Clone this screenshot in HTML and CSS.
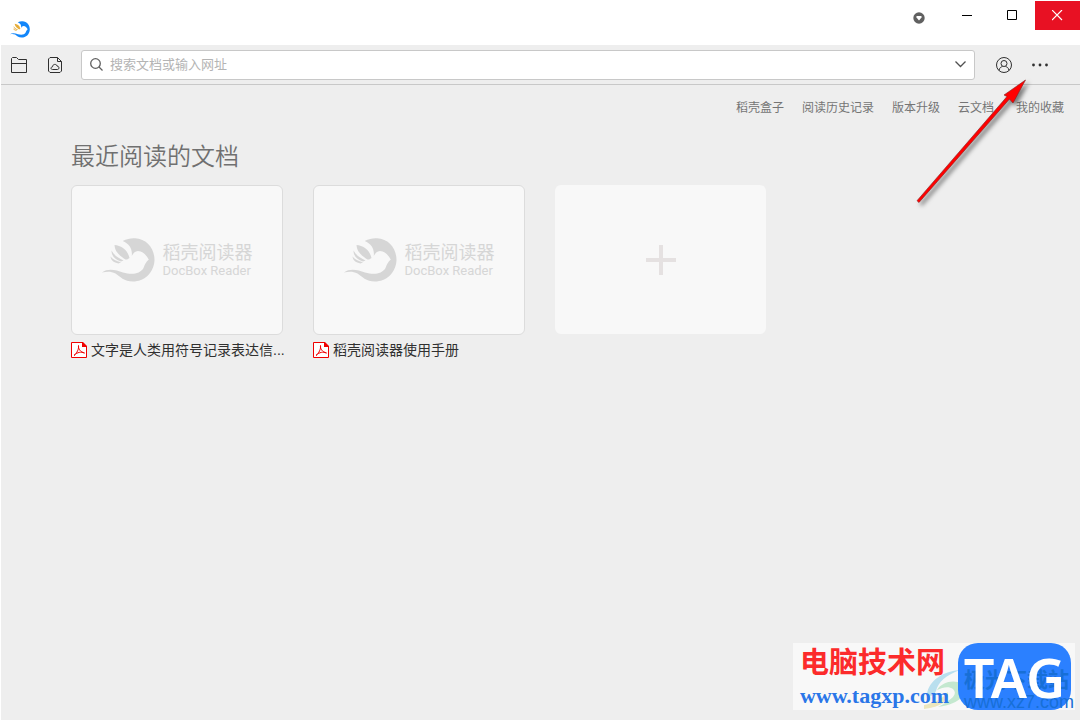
FILE: index.html
```html
<!DOCTYPE html>
<html lang="zh-CN">
<head>
<meta charset="utf-8">
<meta name="viewport" content="width=device-width, initial-scale=1">
<title>稻壳阅读器</title>
<link rel="stylesheet" href="styles.css">
</head>
<body>
<svg class="defs" aria-hidden="true">
  <symbol id="bird" viewBox="0 0 53 44">
    <path fill="currentColor" d="M20.700 3C25 1 29 0 33 .3C45 1 52.500 10.500 52.500 22C52 35 42 43.500 31 43.500C22 43.500 18 38.500 13.500 35.500C9 33 4.500 33.500 0 34.500C6 30 14 32 21 34.500C30 37 38 36 41.500 30C43 26 44 24 46.800 21.500C44 17 41 13 36 13C33 13 31 15.500 29.800 18C30.500 10 27 6 20.700 3Z"/>
    <g class="wing">
      <path d="M12.500 7C19 7.500 25.500 11.500 27.500 20C26.500 21 25 21.700 23.500 21.500C17 17.500 12.500 13 12.500 7Z"/>
      <path d="M9.500 12.500C12 17 16 20 21.500 22.500L19 23.500C13 21.500 9.500 18 9.500 12.500Z"/>
      <path d="M8.500 18.500C11 21.500 14 23 19 24.300L16.500 25.500C12 24.500 9 22.500 8.500 18.500Z"/>
    </g>
  </symbol>
  <symbol id="pdf" viewBox="0 0 16 16">
    <path fill="#fff" stroke="#f00000" d="M.5.5h11l4 4v11H.5z"/>
    <path fill="#f00000" d="M11 0h1l4 4v1h-5z"/>
    <path fill="none" stroke="#f00000" d="M3 13.500C6 11 8 7 7.500 3.500C7 7 9.500 10 13.500 11C10 9.500 6.500 10 3 13.500"/>
  </symbol>
</svg>
<div class="app">
  <header class="titlebar">
    <svg class="app-logo"><use href="#bird"/></svg>
    <button class="skin" aria-label="皮肤">
      <svg width="12" height="12" viewBox="0 0 12 12"><circle cx="6" cy="6" r="5.700" fill="#606060"/><path fill="#fff" d="M3.500 4h5v1.500L6 8.500 3.500 5.500z"/></svg>
    </button>
    <button class="win" aria-label="最小化"><svg width="11" height="11"><path stroke="#000" d="M0 5.500h10"/></svg></button>
    <button class="win" aria-label="最大化"><svg width="11" height="11"><path fill="none" stroke="#000" d="M.5.5h9v9h-9z"/></svg></button>
    <button class="win close" aria-label="关闭"><svg width="11" height="11"><path stroke="#fff" stroke-width="1.200" d="M0 0l10 10M10 0L0 10"/></svg></button>
  </header>
  <div class="toolbar">
    <button class="tool" aria-label="打开文件">
      <svg width="16" height="16" fill="none" stroke="#303030"><path d="M.5 15.500V1.500L1.500.5H5.500L7.500 2.500H15.500V15.500ZM.5 6.500h15"/></svg>
    </button>
    <button class="tool" aria-label="云文档">
      <svg width="14" height="16" fill="none" stroke="#303030"><path d="M.5 14V2L2 .5H9.500L13.500 4.500V14L12 15.500H2ZM9.500.5v4h4"/><path d="M4.500 12.500C2.500 12.500 2.500 10 4.500 9.800C4.500 7 8.500 6.500 9 9C11.500 9 11.500 12.500 9.500 12.500Z"/></svg>
    </button>
    <form class="search">
      <svg width="13" height="13" fill="none" stroke="#606060" stroke-width="1.300"><circle cx="5.500" cy="5.500" r="4.800"/><path d="M9 9l3.500 3.500"/></svg>
      <input type="text" aria-label="搜索" placeholder="搜索文档或输入网址">
      <button type="button" aria-label="展开"><svg width="11" height="7" fill="none" stroke="#505050" stroke-width="1.300"><path d="M.5.5l5 5 5-5"/></svg></button>
    </form>
    <button class="tool account" aria-label="账户">
      <svg width="16" height="16" fill="none" stroke="#303030"><circle cx="8" cy="8" r="7.500"/><circle cx="8" cy="6.500" r="3"/><path d="M3 13.500C3.500 10.500 5 10 6.500 9.500M13 13.500C12.500 10.500 11 10 9.500 9.500"/></svg>
    </button>
    <button class="tool" aria-label="更多">
      <svg width="16" height="4" fill="#303030"><circle cx="1.500" cy="2" r="1.400"/><circle cx="8" cy="2" r="1.400"/><circle cx="14.500" cy="2" r="1.400"/></svg>
    </button>
  </div>
  <nav class="links">
    <a href="#">稻壳盒子</a><a href="#">阅读历史记录</a><a href="#">版本升级</a><a href="#">云文档</a><a class="favorites" href="#">我的收藏</a>
  </nav>
  <main class="recent">
    <h1>最近阅读的文档</h1>
    <div class="cards">
      <a class="doc" href="#">
        <span class="thumb"><svg class="bird"><use href="#bird"/></svg><span class="brand"><span class="brand-cn">稻壳阅读器</span><span class="brand-en">DocBox Reader</span></span></span>
        <span class="name"><svg width="16" height="16"><use href="#pdf"/></svg>文字是人类用符号记录表达信...</span>
      </a>
      <a class="doc" href="#">
        <span class="thumb"><svg class="bird"><use href="#bird"/></svg><span class="brand"><span class="brand-cn">稻壳阅读器</span><span class="brand-en">DocBox Reader</span></span></span>
        <span class="name"><svg width="16" height="16"><use href="#pdf"/></svg>稻壳阅读器使用手册</span>
      </a>
      <button class="add" aria-label="添加文档"><svg width="30" height="30" fill="#e5e1e1"><path d="M13 0h4v13h13v4H17v13h-4V17H0v-4h13z"/></svg></button>
    </div>
  </main>
  <svg class="arrow" width="130" height="140" viewBox="0 0 130 140" aria-hidden="true">
    <path fill="#f00" stroke="#802020" stroke-width=".6" d="M115.500 4L103 27 99.500 23 9 126.500 7 124.700 97 20.500 94 19Z"/>
  </svg>
  <aside class="stamp">
    <svg class="swirl" width="46" height="40" viewBox="0 0 46 40" aria-hidden="true">
      <path fill="#b9dfee" d="M3 24C5 10 20 1 36 0C22 5 14 12 12 21C10 26 5 27 3 24Z"/>
      <path fill="#c4e8cf" d="M13 20C18 12 30 9 38 14C46 22 37 34 14 37C29 29 34 24 29 19C25 16 19 17 13 20Z"/>
      <path fill="#ece6bd" d="M0 35C10 33 18 29 24 22C25 31 17 37 0 39Z"/>
    </svg>
    <div class="stamp-text"><strong>电脑技术网</strong><span>www.tagxp.com</span></div>
    <div class="tag">
      <span class="ghost"><b>极光下载站</b><span>www.xz7.com</span></span>
      <span class="tag-word">TAG</span>
    </div>
  </aside>
</div>
</body>
</html>
```
FILE: styles.css
```css
* { box-sizing: border-box; }
body {
  margin: 0;
  background: #fff;
  font: 12px/18px "Liberation Sans", "Noto Sans CJK SC", sans-serif;
}
.defs { position: absolute; width: 0; height: 0; }
button { border: 0; padding: 0; background: none; font: inherit; }
a { color: inherit; text-decoration: none; }
svg { display: block; flex: none; }
.app {
  position: relative;
  display: flex;
  flex-direction: column;
  min-height: 100vh;
  border: 1px solid #fff;
  border-top: 0;
  background: #eee;
}
.titlebar {
  display: flex;
  align-items: flex-start;
  height: 45px;
  padding-top: 1px;
  background: #fff;
}
.app-logo { width: 20px; height: 17px; margin: 20px auto 0 9px; color: #1286fa; --wing: #e5ac38; }
.wing { fill: var(--wing, currentColor); }
.skin { margin: 11px 20px 0 0; }
.win { display: grid; place-items: center; width: 45px; height: 29px; }
.win.close { background: #e81123; }
.toolbar {
  display: flex;
  align-items: center;
  height: 40px;
  padding-right: 22px;
  border-bottom: 1px solid #c8c8c8;
}
.tool { display: grid; place-items: center; width: 36px; height: 36px; }
.search {
  display: flex;
  flex: 1;
  align-items: center;
  height: 30px;
  margin: 0 11px 0 8px;
  padding: 0 8px;
  border: 1px solid #c8c8c8;
  border-radius: 3px;
  background: #fff;
}
.search input {
  flex: 1;
  min-width: 0;
  margin-left: 7px;
  padding: 0;
  border: 0;
  outline: 0;
  background: none;
  font: 13px/20px "Liberation Sans", "Noto Sans CJK SC", sans-serif;
}
.search input::placeholder { color: #b4b4b4; opacity: 1; }
.links {
  display: flex;
  justify-content: flex-end;
  gap: 18px;
  padding: 14px 16px 0;
  color: #757575;
}
.favorites { margin-left: 4px; }
.recent { padding: 24px 70px; }
h1 { margin: 0 0 12px; color: #707070; font-size: 24px; line-height: 32px; font-weight: 350; }
.cards { display: flex; flex-wrap: wrap; gap: 30px; }
.doc { width: 212px; }
.thumb {
  display: flex;
  align-items: center;
  justify-content: center;
  gap: 8px;
  height: 150px;
  border: 1px solid #dcdcdc;
  border-radius: 6px;
  background: #f8f8f8;
  color: #d6d6d6;
}
.bird { width: 53px; height: 44px; }
.brand { display: flex; flex-direction: column; }
.brand-cn { font-size: 18px; line-height: 22px; }
.brand-en { font: 13px/14px Roboto, sans-serif; }
.name {
  display: flex;
  align-items: center;
  gap: 4px;
  padding-top: 5px;
  color: #303030;
  font-size: 14px;
  line-height: 20px;
  white-space: nowrap;
}
.add { display: grid; place-items: center; width: 211px; height: 149px; border-radius: 6px; background: #f8f8f8; }
.arrow { position: absolute; top: 76px; right: 40px; filter: drop-shadow(3px 3px 2px rgba(0, 0, 0, .5)); pointer-events: none; }
.stamp {
  position: absolute;
  right: 5px;
  bottom: 10px;
  display: flex;
  gap: 9px;
  height: 67px;
  padding: 0 4px 0 7px;
  background: #f8f8f8;
}
.swirl { position: absolute; right: 105px; bottom: 0; }
.stamp-text { position: relative; display: flex; flex-direction: column; color: #2a76e8; }
.stamp-text strong { color: #fc2b2b; font-size: 29px; line-height: 40px; }
.stamp-text span { font: bold 22px/26px "Liberation Serif", serif; }
.tag { position: relative; display: grid; place-items: center; width: 113px; border-radius: 20px; background: #2b80ff; }
.tag-word { position: relative; color: #fff; font: 600 54px/66px "Noto Sans", sans-serif; }
.ghost { position: absolute; left: 6px; top: 24px; color: #176fd6; white-space: nowrap; }
.ghost b { display: block; font-size: 21px; line-height: 26px; }
.ghost span { display: block; font-size: 18px; line-height: 18px; }
```
